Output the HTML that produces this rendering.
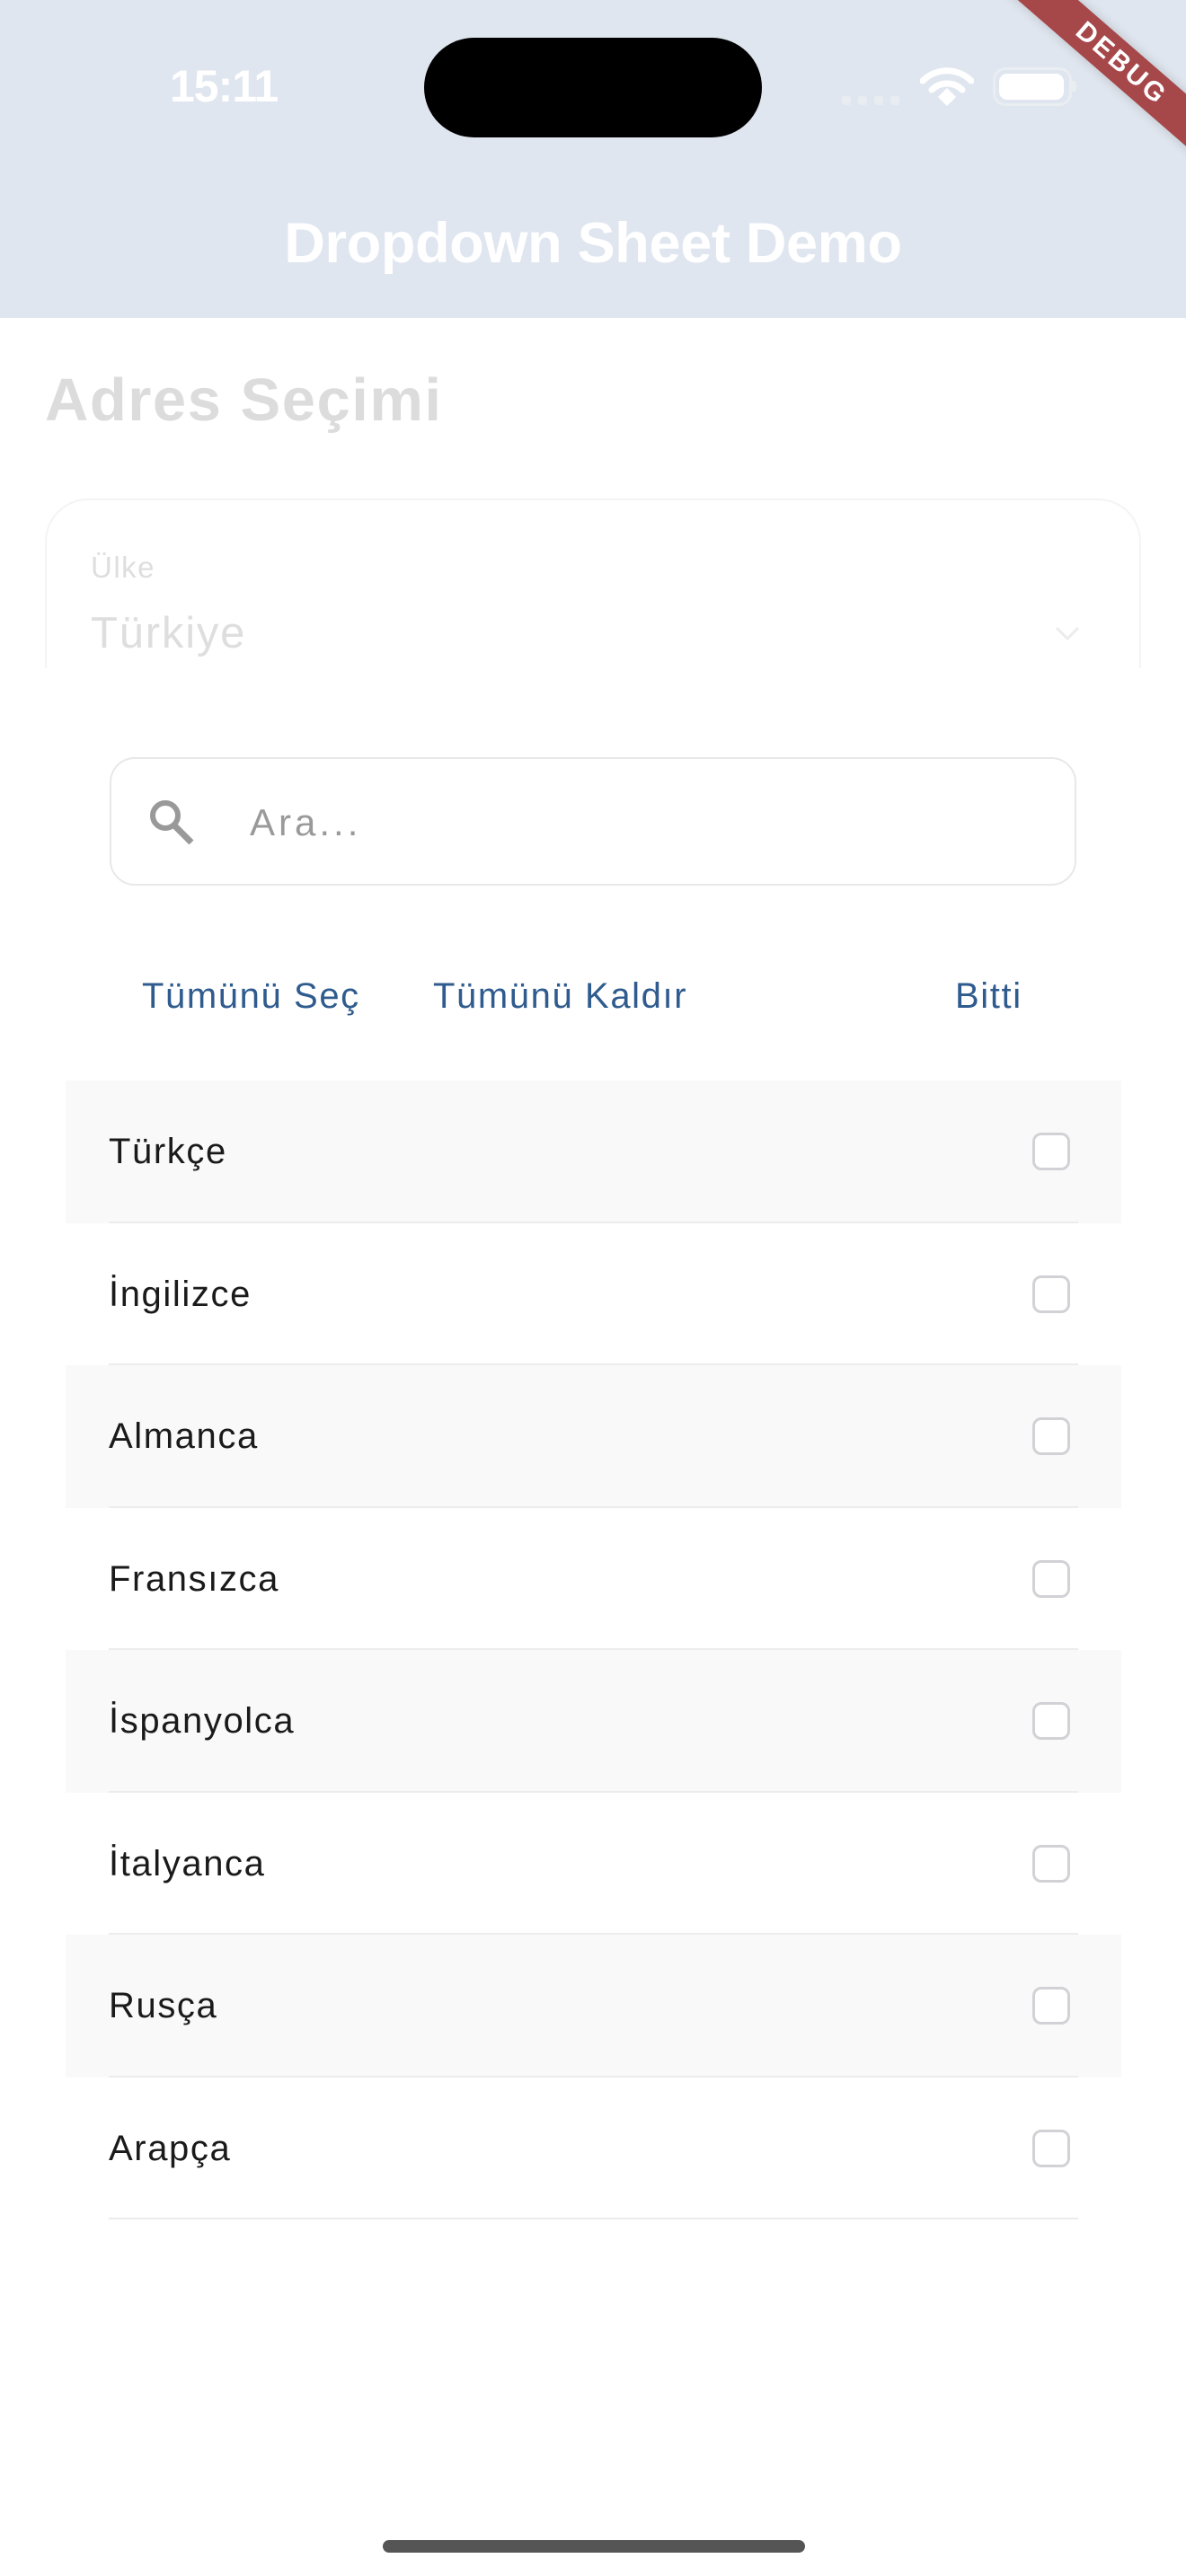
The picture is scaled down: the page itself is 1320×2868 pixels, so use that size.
<!DOCTYPE html>
<html><head><meta charset="utf-8"><style>
*{margin:0;padding:0;box-sizing:border-box}
html,body{width:1320px;height:2868px;overflow:hidden;background:#fff;font-family:"Liberation Sans",sans-serif;position:relative}
.abs{position:absolute}
.hdr{left:0;top:0;width:1320px;height:354px;background:#e0e6ef}
.row{position:absolute;left:73px;width:1175px;height:158.5px}
.row.g{background:#f9f9f9}
.row .t{position:absolute;left:48px;top:0;line-height:158.5px;font-size:40px;color:#1a1a1a;letter-spacing:1.6px}
.row .cb{position:absolute;left:1076px;top:58px;width:42px;height:42px;border:3px solid #d2d2d6;border-radius:10px;background:#fff}
.row .d{position:absolute;left:48px;right:48px;bottom:0;height:2px;background:#ececec}
.btn{position:absolute;top:1084px;font-size:40px;color:#2f5b8e;line-height:50px;letter-spacing:1.6px}
</style></head><body>
<div class="abs hdr"></div>
<div class="abs" style="left:189px;top:66px;font-size:50px;font-weight:bold;color:#fff;line-height:60px;letter-spacing:-1px">15:11</div>
<div class="abs" style="left:472px;top:42px;width:376px;height:111px;background:#000;border-radius:56px"></div>
<div class="abs" style="left:937px;top:107px;width:10px;height:10px;border-radius:3px;background:#e9edf2"></div>
<div class="abs" style="left:955px;top:107px;width:10px;height:10px;border-radius:3px;background:#e9edf2"></div>
<div class="abs" style="left:973px;top:107px;width:10px;height:10px;border-radius:3px;background:#e9edf2"></div>
<div class="abs" style="left:991px;top:107px;width:10px;height:10px;border-radius:3px;background:#e9edf2"></div>
<svg class="abs" style="left:1024px;top:74px" width="60" height="44" viewBox="0 0 60 44"><path d="M3 16 A38 38 0 0 1 57 16" stroke="#fff" stroke-width="7" fill="none" stroke-linecap="round"/><path d="M13 26 A24 24 0 0 1 47 26" stroke="#fff" stroke-width="7" fill="none" stroke-linecap="round"/><path d="M20 34 L30 24 L40 34 L30 44 Z" fill="#fff"/></svg>
<div class="abs" style="left:1105px;top:75px;width:88px;height:43px;border:3px solid #eaeef3;border-radius:14px"></div>
<div class="abs" style="left:1112px;top:82px;width:72px;height:29px;background:#fff;border-radius:9px"></div>
<div class="abs" style="left:1193px;top:90px;width:5px;height:12px;background:#eaeef3;border-radius:0 3px 3px 0"></div>
<div class="abs" style="left:1073px;top:49px;width:350px;height:44px;background:#a6474a;transform:rotate(41deg);color:#fff;font-weight:bold;font-size:30px;text-align:center;line-height:44px;letter-spacing:3px;box-shadow:0 0 12px rgba(0,0,0,.18)">DEBUG</div>
<div class="abs" style="left:0;width:1320px;top:234px;text-align:center;font-size:63px;font-weight:bold;color:#fff;line-height:74px;letter-spacing:-0.3px">Dropdown Sheet Demo</div>
<div class="abs" style="left:50px;top:406px;font-size:67px;font-weight:bold;color:#dcdcdc;line-height:80px;letter-spacing:1.5px">Adres Seçimi</div>
<div class="abs" style="left:50px;top:555px;width:1220px;height:260px;border:2px solid #f4f4f4;border-radius:48px"></div>
<div class="abs" style="left:101px;top:612px;font-size:33px;color:#dedede;line-height:40px;letter-spacing:1.5px">Ülke</div>
<div class="abs" style="left:101px;top:675px;font-size:49px;color:#dedede;line-height:60px;letter-spacing:1.8px">Türkiye</div>
<svg class="abs" style="left:1173px;top:695px" width="30" height="20" viewBox="0 0 30 20"><path d="M3 4 L15 16 L27 4" stroke="#ececec" stroke-width="3" fill="none"/></svg>
<div class="abs" style="left:0;top:744px;width:1320px;height:2124px;background:#fff"></div>
<div class="abs" style="left:122px;top:843px;width:1076px;height:143px;border:2px solid #e8e8e8;border-radius:28px"></div>
<svg class="abs" style="left:163px;top:888px" width="58" height="52" viewBox="0 0 58 52"><circle cx="21" cy="20" r="14" stroke="#999" stroke-width="6" fill="none"/><path d="M31 31 L50 50" stroke="#999" stroke-width="7"/></svg>
<div class="abs" style="left:278px;top:890px;font-size:42px;color:#9a9a9a;line-height:52px;letter-spacing:4px">Ara...</div>
<div class="btn" style="left:158px">Tümünü Seç</div>
<div class="btn" style="left:482px">Tümünü Kaldır</div>
<div class="btn" style="left:1063px">Bitti</div>
<div class="row g" style="top:1203px"><div class="t">Türkçe</div><div class="cb"></div><div class="d"></div></div>
<div class="row" style="top:1361.5px"><div class="t">İngilizce</div><div class="cb"></div><div class="d"></div></div>
<div class="row g" style="top:1520px"><div class="t">Almanca</div><div class="cb"></div><div class="d"></div></div>
<div class="row" style="top:1678.5px"><div class="t">Fransızca</div><div class="cb"></div><div class="d"></div></div>
<div class="row g" style="top:1837px"><div class="t">İspanyolca</div><div class="cb"></div><div class="d"></div></div>
<div class="row" style="top:1995.5px"><div class="t">İtalyanca</div><div class="cb"></div><div class="d"></div></div>
<div class="row g" style="top:2154px"><div class="t">Rusça</div><div class="cb"></div><div class="d"></div></div>
<div class="row" style="top:2312.5px"><div class="t">Arapça</div><div class="cb"></div><div class="d"></div></div>
<div class="abs" style="left:426px;top:2828px;width:470px;height:14px;background:#555;border-radius:7px"></div>
</body></html>
